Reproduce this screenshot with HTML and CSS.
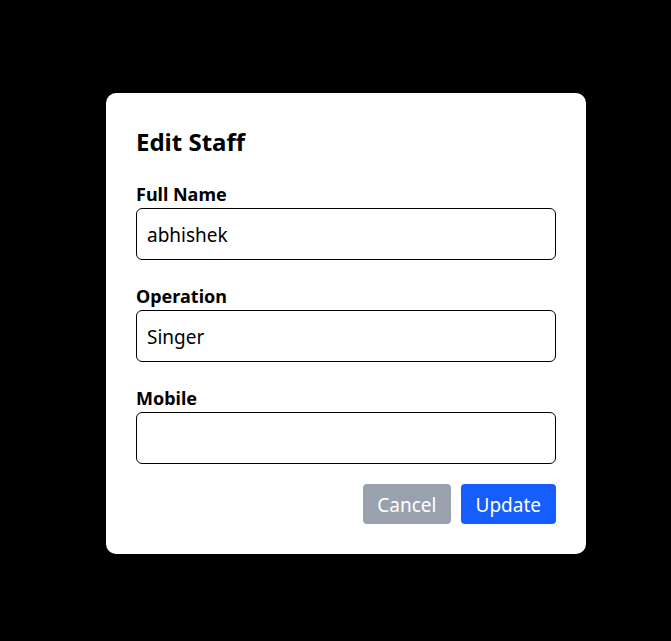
FILE: index.html
```html
<!DOCTYPE html>
<html>
<head>
<meta charset="utf-8">
<link rel="stylesheet" href="styles.css">
</head>
<body>
<div class="overlay">
  <div class="modal">
    <h2 class="title">Edit Staff</h2>
    <div class="field">
      <label class="label">Full Name</label>
      <input class="input" type="text" value="abhishek">
    </div>
    <div class="field">
      <label class="label">Operation</label>
      <input class="input" type="text" value="Singer">
    </div>
    <div class="field">
      <label class="label">Mobile</label>
      <input class="input" type="text" value="">
    </div>
    <div class="actions">
      <button class="btn btn-cancel">Cancel</button>
      <button class="btn btn-update">Update</button>
    </div>
  </div>
</div>
</body>
</html>
```
FILE: styles.css
```css
html, body {
  margin: 0;
  height: 100%;
  background: #000;
}
body {
  font-family: "Noto Sans", "Open Sans", sans-serif;
}
.overlay {
  display: flex;
  justify-content: center;
  padding-top: 93px;
  padding-left: 21px;
}
.modal {
  width: 420px;
  background: #fff;
  border-radius: 10px;
  padding: 30px;
}
.title {
  margin: 3px 0 22px;
  font-size: 24px;
  line-height: 32px;
  font-weight: 700;
  color: #000;
}
.field {
  display: flex;
  flex-direction: column;
  margin-bottom: 22px;
}
.label {
  font-size: 18px;
  line-height: 28px;
  font-weight: 700;
  color: #000;
}
.input {
  box-sizing: border-box;
  height: 52px;
  width: 100%;
  border: 1px solid #000;
  border-radius: 6px;
  padding: 2px 10px 0;
  font-family: inherit;
  font-size: 19px;
  color: #000;
  outline: none;
}
.actions {
  display: flex;
  justify-content: flex-end;
  gap: 10px;
  margin-top: -2px;
}
.btn {
  height: 40px;
  border: none;
  border-radius: 4px;
  padding: 2px 14px 0;
  font-family: inherit;
  font-size: 19px;
  color: #fff;
}
.btn-cancel {
  background: #99a1af;
}
.btn-update {
  background: #155dfc;
  padding: 2px 15px 0;
}
```
